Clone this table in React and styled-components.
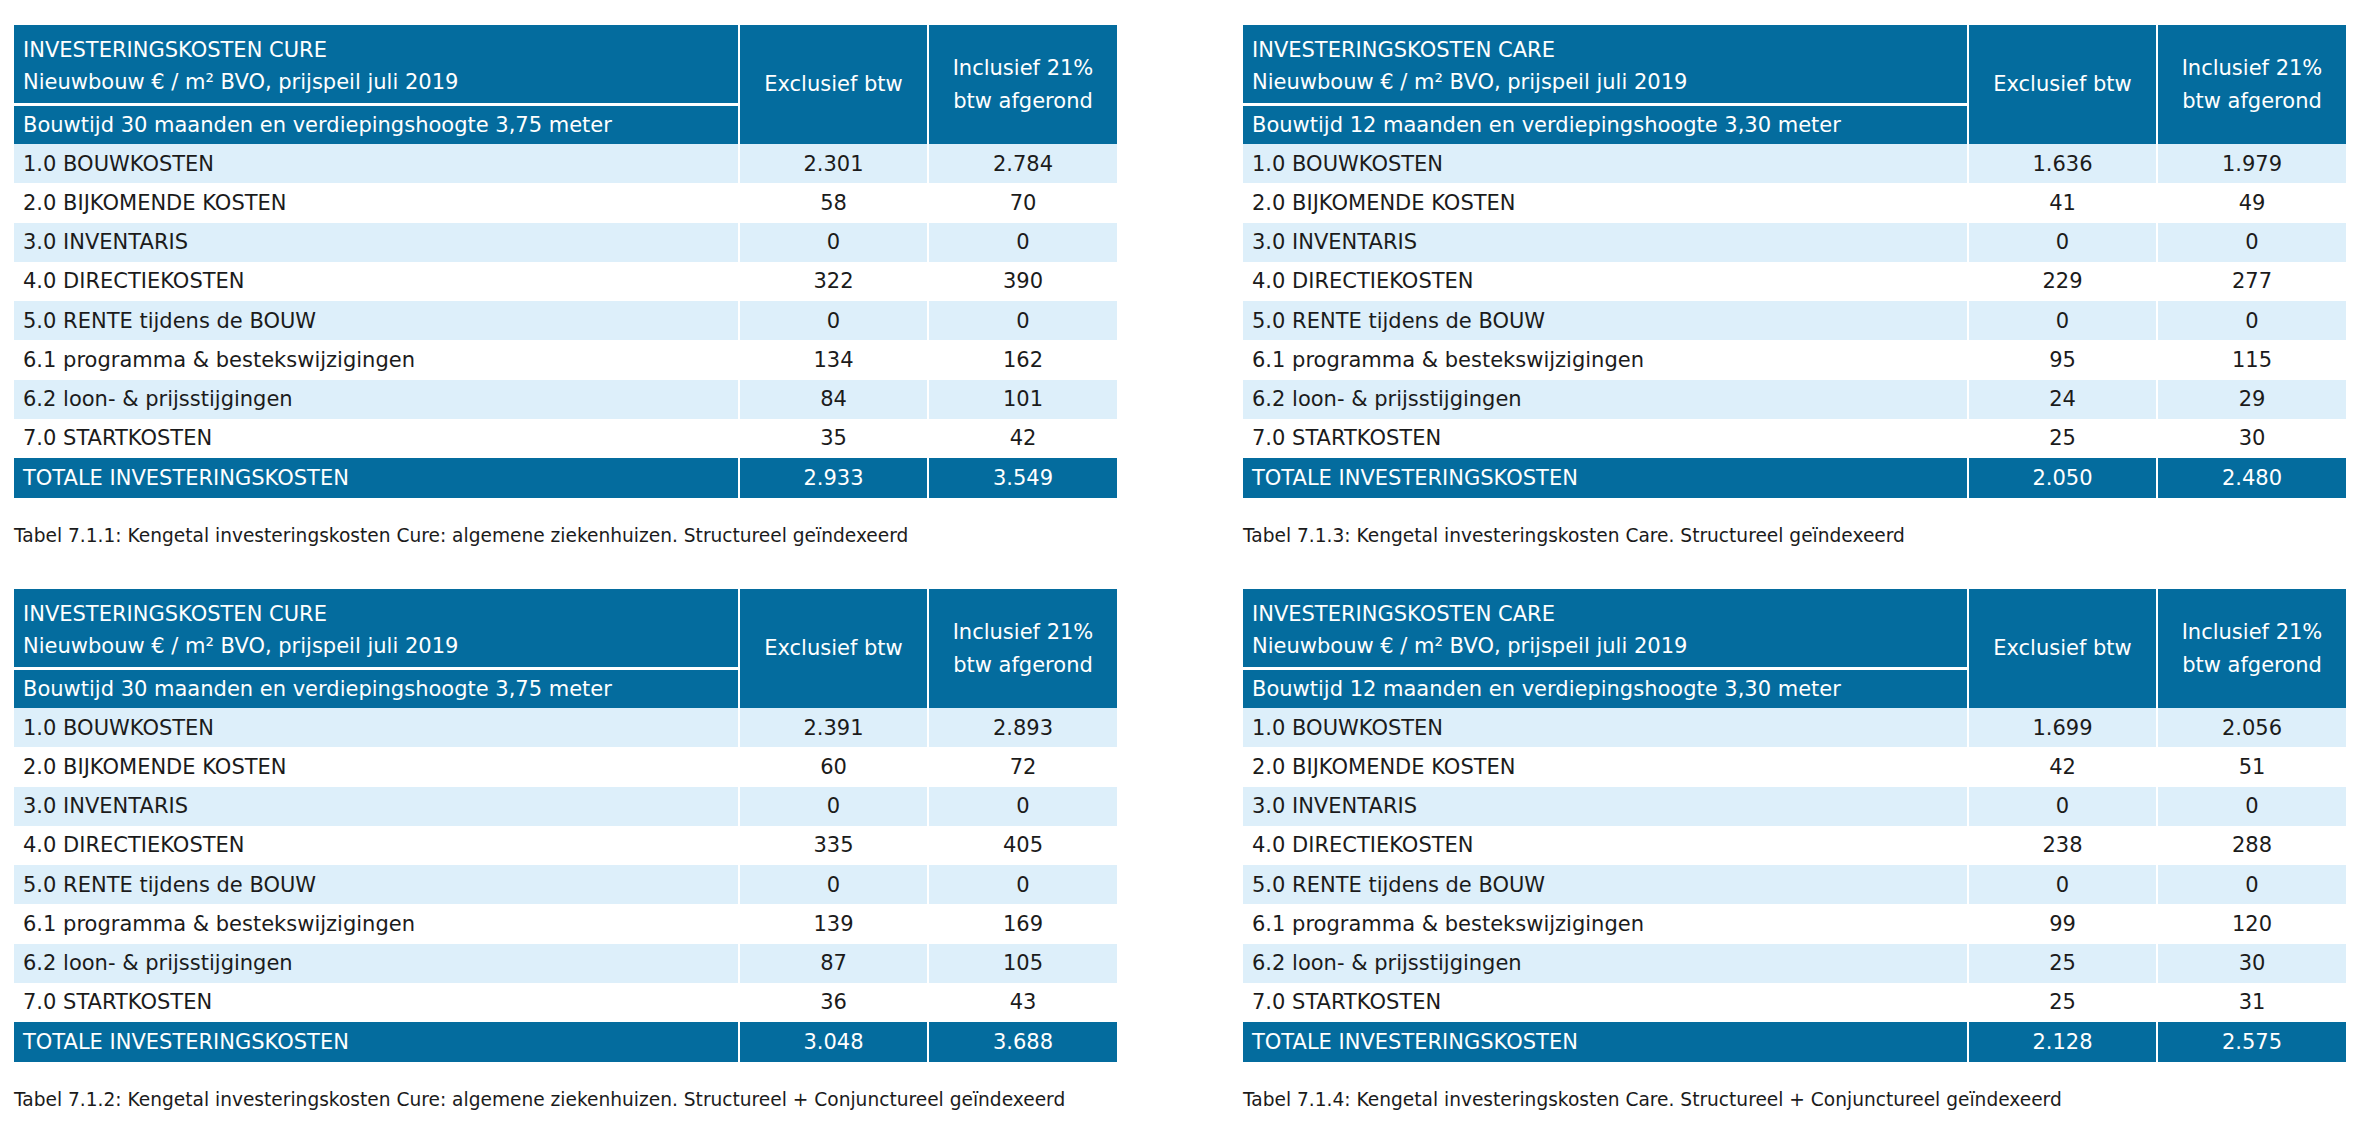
import React from 'react';
import styled, { createGlobalStyle } from 'styled-components';

const GlobalStyle = createGlobalStyle`
  html, body {
    margin: 0;
    padding: 0;
    background: #ffffff;
  }
  body {
    font-family: "DejaVu Sans", "Liberation Sans", Arial, sans-serif;
    color: #1b1b1b;
  }
`;

const BLUE = '#046c9e';
const PALE = '#ddeffa';

const Page = styled.div`
  display: grid;
  grid-template-columns: 1103px 1103px;
  column-gap: 126px;
  row-gap: 41px;
  padding: 25px 0 0 14px;
  width: 2361px;
  box-sizing: border-box;
`;

const Block = styled.div`
  display: flex;
  flex-direction: column;
`;

const Table = styled.div`
  display: flex;
  flex-direction: column;
  width: 1103px;
  font-size: 21px;
`;

const Row = styled.div`
  display: grid;
  grid-template-columns: 724px 187px 188px;
  column-gap: 2px;
  height: ${(props) => (props.total ? '40px' : '39.25px')};
`;

const HeadRow = styled(Row)`
  height: 119px;
`;

const HeadLeft = styled.div`
  display: flex;
  flex-direction: column;
  row-gap: 3px;
`;

const TitleBlock = styled.div`
  height: 78px;
  box-sizing: border-box;
  padding: 9px 9px 0;
  background: ${BLUE};
  color: #ffffff;
  line-height: 32px;
`;

const SubBlock = styled.div`
  flex: 1;
  display: flex;
  align-items: center;
  padding: 0 9px;
  background: ${BLUE};
  color: #ffffff;
`;

const HeadCell = styled.div`
  display: flex;
  align-items: center;
  justify-content: center;
  text-align: center;
  background: ${BLUE};
  color: #ffffff;
  line-height: 33px;
`;

const Cell = styled.div`
  display: flex;
  align-items: center;
  justify-content: ${(props) => (props.label ? 'flex-start' : 'center')};
  padding: ${(props) => (props.label ? '0 9px' : '0')};
  background: ${(props) =>
    props.total ? BLUE : props.shade ? PALE : '#ffffff'};
  color: ${(props) => (props.total ? '#ffffff' : '#1b1b1b')};
  white-space: nowrap;
`;

const Caption = styled.div`
  margin-top: 26px;
  font-size: 18.6px;
  line-height: 24px;
  color: #1b1b1b;
  white-space: nowrap;
`;

const labels = [
  '1.0 BOUWKOSTEN',
  '2.0 BIJKOMENDE KOSTEN',
  '3.0 INVENTARIS',
  '4.0 DIRECTIEKOSTEN',
  '5.0 RENTE tijdens de BOUW',
  '6.1 programma & bestekswijzigingen',
  '6.2 loon- & prijsstijgingen',
  '7.0 STARTKOSTEN',
];

const tables = [
  {
    kind: 'CURE',
    build: 'Bouwtijd 30 maanden en verdiepingshoogte 3,75 meter',
    values: [
      ['2.301', '2.784'],
      ['58', '70'],
      ['0', '0'],
      ['322', '390'],
      ['0', '0'],
      ['134', '162'],
      ['84', '101'],
      ['35', '42'],
    ],
    total: ['2.933', '3.549'],
    caption:
      'Tabel 7.1.1: Kengetal investeringskosten Cure: algemene ziekenhuizen. Structureel geïndexeerd',
  },
  {
    kind: 'CARE',
    build: 'Bouwtijd 12 maanden en verdiepingshoogte 3,30 meter',
    values: [
      ['1.636', '1.979'],
      ['41', '49'],
      ['0', '0'],
      ['229', '277'],
      ['0', '0'],
      ['95', '115'],
      ['24', '29'],
      ['25', '30'],
    ],
    total: ['2.050', '2.480'],
    caption:
      'Tabel 7.1.3: Kengetal investeringskosten Care. Structureel geïndexeerd',
  },
  {
    kind: 'CURE',
    build: 'Bouwtijd 30 maanden en verdiepingshoogte 3,75 meter',
    values: [
      ['2.391', '2.893'],
      ['60', '72'],
      ['0', '0'],
      ['335', '405'],
      ['0', '0'],
      ['139', '169'],
      ['87', '105'],
      ['36', '43'],
    ],
    total: ['3.048', '3.688'],
    caption:
      'Tabel 7.1.2: Kengetal investeringskosten Cure: algemene ziekenhuizen. Structureel + Conjunctureel geïndexeerd',
  },
  {
    kind: 'CARE',
    build: 'Bouwtijd 12 maanden en verdiepingshoogte 3,30 meter',
    values: [
      ['1.699', '2.056'],
      ['42', '51'],
      ['0', '0'],
      ['238', '288'],
      ['0', '0'],
      ['99', '120'],
      ['25', '30'],
      ['25', '31'],
    ],
    total: ['2.128', '2.575'],
    caption:
      'Tabel 7.1.4: Kengetal investeringskosten Care. Structureel + Conjunctureel geïndexeerd',
  },
];

const CostTable = ({ data }) => (
  <Block>
    <Table>
      <HeadRow>
        <HeadLeft>
          <TitleBlock>
            INVESTERINGSKOSTEN {data.kind}
            <br />
            Nieuwbouw € / m² BVO, prijspeil juli 2019
          </TitleBlock>
          <SubBlock>{data.build}</SubBlock>
        </HeadLeft>
        <HeadCell>Exclusief btw</HeadCell>
        <HeadCell>
          Inclusief 21%
          <br />
          btw afgerond
        </HeadCell>
      </HeadRow>
      {labels.map((label, i) => {
        const shade = i % 2 === 0;
        return (
          <Row key={label}>
            <Cell label shade={shade}>
              {label}
            </Cell>
            <Cell shade={shade}>{data.values[i][0]}</Cell>
            <Cell shade={shade}>{data.values[i][1]}</Cell>
          </Row>
        );
      })}
      <Row total>
        <Cell label total>
          TOTALE INVESTERINGSKOSTEN
        </Cell>
        <Cell total>{data.total[0]}</Cell>
        <Cell total>{data.total[1]}</Cell>
      </Row>
    </Table>
    <Caption>{data.caption}</Caption>
  </Block>
);

const App = () => (
  <>
    <GlobalStyle />
    <Page>
      {tables.map((t) => (
        <CostTable key={t.caption} data={t} />
      ))}
    </Page>
  </>
);

export default App;
